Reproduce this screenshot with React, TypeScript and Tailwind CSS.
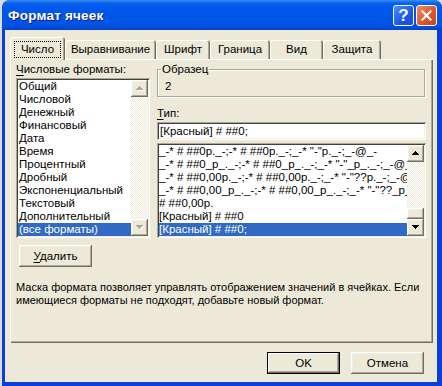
import React from "react";

const raised =
  "shadow-[inset_-1px_-1px_0_#716F64,inset_1px_1px_0_#fff,inset_-2px_-2px_0_#ACA899,inset_2px_2px_0_#F1EFE2]";
const sunken =
  "shadow-[inset_1px_1px_0_#ACA899,inset_-1px_-1px_0_#fff,inset_2px_2px_0_#404040,inset_-2px_-2px_0_#F1EFE2]";
const track =
  "bg-[repeating-conic-gradient(#fff_0_25%,#ECE9D8_0_50%)] bg-[length:2px_2px]";

const leftItems = [
  "Общий",
  "Числовой",
  "Денежный",
  "Финансовый",
  "Дата",
  "Время",
  "Процентный",
  "Дробный",
  "Экспоненциальный",
  "Текстовый",
  "Дополнительный",
  "(все форматы)",
];

const typeItems = [
  '_-* # ##0р._-;-* # ##0р._-;_-* "-"р._-;_-@_-',
  '_-* # ##0_р_._-;-* # ##0_р_._-;_-* "-"_р_._-;_-@_-',
  '_-* # ##0,00р._-;-* # ##0,00р._-;_-* "-"??р._-;_-@_-',
  '_-* # ##0,00_р_._-;-* # ##0,00_р_._-;_-* "-"??_р_._-;_-@_-',
  "# ##0,00р.",
  "[Красный] # ##0",
  "[Красный] # ##0;",
];

const tabs = [
  { label: "Выравнивание", w: "w-[91px]" },
  { label: "Шрифт", w: "w-[54px]" },
  { label: "Граница", w: "w-[60px]" },
  { label: "Вид", w: "w-[53px]" },
  { label: "Защита", w: "w-[58px]" },
];

function Arrow({ up, disabled }: { up?: boolean; disabled?: boolean }) {
  const d = up
    ? "M3 0h1v1h1v1h1v1h1v1H0V3h1V2h1V1h1z"
    : "M0 0h7v1H6v1H5v1H4v1H3V3H2V2H1V1H0z";
  return (
    <svg width="8" height="5" viewBox="0 0 8 5" shapeRendering="crispEdges">
      {disabled && <path d={d} fill="#fff" transform="translate(1 1)" />}
      <path d={d} fill={disabled ? "#ACA899" : "#000"} />
    </svg>
  );
}

function ScrollButton({ up, disabled }: { up?: boolean; disabled?: boolean }) {
  return (
    <div className={`w-[17px] h-[17px] shrink-0 bg-[#ECE9D8] flex items-center justify-center ${raised}`}>
      <Arrow up={up} disabled={disabled} />
    </div>
  );
}

function Button({ children, primary }: { children: React.ReactNode; primary?: boolean }) {
  return (
    <div
      className={`w-[73px] h-[22px] bg-[#ECE9D8] flex items-center justify-center ${
        primary
          ? "shadow-[inset_0_0_0_1px_#000,inset_-2px_-2px_0_#716F64,inset_2px_2px_0_#fff,inset_-3px_-3px_0_#ACA899]"
          : raised
      }`}
    >
      {children}
    </div>
  );
}

export default function App() {
  return (
    <div className="w-[442px] h-[386px] bg-[#D8DCE4] flex overflow-hidden font-['Liberation_Sans',Arial,sans-serif] text-[11.5px] leading-[13px] text-black">
      <div className="ml-[2px] w-[440px] h-[386px] rounded-t-[8px] bg-[#0B3FD9] flex flex-col">
        {/* title bar */}
        <div className="h-[30px] shrink-0 rounded-t-[8px] bg-[linear-gradient(to_bottom,#3D8DF5_0%,#0A62EC_10%,#0058EE_25%,#0055E8_60%,#0052E2_85%,#0043CC_100%)] flex items-center pl-[6px] pr-[5px]">
          <span className="text-white font-bold text-[13.5px] [text-shadow:1px_1px_0_#0A1E8C] tracking-[0.2px]">
            Формат ячеек
          </span>
          <div className="ml-auto flex gap-[2px]">
            <div className="w-[21px] h-[21px] rounded-[3px] border border-white bg-[linear-gradient(135deg,#4A8BFF,#1C58E8_60%,#1A4CD0)] flex items-center justify-center">
              <span className="text-white font-bold text-[17px] leading-none">?</span>
            </div>
            <div className="w-[21px] h-[21px] rounded-[3px] border border-white bg-[linear-gradient(135deg,#F08A6A,#E0562E_55%,#C8401C)] flex items-center justify-center">
              <svg width="11" height="11" viewBox="0 0 11 11">
                <path d="M1.5 1.5 9.5 9.5M9.5 1.5 1.5 9.5" stroke="#fff" strokeWidth="2.2" strokeLinecap="square" />
              </svg>
            </div>
          </div>
        </div>

        {/* body */}
        <div className="ml-[3px] w-[432px] h-[352px] bg-[#ECE9D8] flex flex-col">
          {/* tabs */}
          <div className="flex items-end h-[22px] mt-[7px] ml-[5px]">
            <div className="relative z-10 w-[55px] h-[23px] -mb-px rounded-t-[3px] bg-[#ECE9D8] shadow-[inset_1px_1px_0_#fff,inset_-1px_0_0_#716F64,inset_-2px_0_0_#ACA899] flex justify-center pt-[4px]">
              <span className="w-[47px] h-[17px] border border-dotted border-black flex items-center justify-center">
                Число
              </span>
            </div>
            {tabs.map((t) => (
              <div
                key={t.label}
                className={`${t.w} h-[19px] rounded-t-[3px] bg-[#ECE9D8] shadow-[inset_1px_1px_0_#fff,inset_-1px_0_0_#716F64,inset_-2px_0_0_#ACA899] flex items-center justify-center`}
              >
                {t.label}
              </div>
            ))}
          </div>

          {/* panel */}
          <div className="ml-[5px] w-[423px] h-[284px] shrink-0 shadow-[inset_1px_1px_0_#fff,inset_-1px_-1px_0_#716F64,inset_-2px_-2px_0_#ACA899] flex flex-col">
            <div className="flex">
              {/* left column */}
              <div className="ml-[6px] w-[134px] flex flex-col">
                <div className="mt-[4px] h-[13px]">
                  <span className="underline underline-offset-2">Ч</span>исловые форматы:
                </div>
                <div className={`mt-[2px] h-[160px] bg-white p-[2px] flex ${sunken}`}>
                  <div className="flex-1 flex flex-col overflow-hidden">
                    {leftItems.map((it, i) => (
                      <div
                        key={it}
                        className={`h-[13px] pl-px whitespace-nowrap ${
                          i === leftItems.length - 1 ? "bg-[#316AC5] text-white" : ""
                        }`}
                      >
                        {it}
                      </div>
                    ))}
                  </div>
                  <div className="w-[17px] flex flex-col">
                    <ScrollButton up disabled />
                    <div className={`flex-1 ${track}`} />
                    <ScrollButton disabled />
                  </div>
                </div>
              </div>

              {/* right column */}
              <div className="ml-[7px] w-[269px] flex flex-col">
                <div className="relative mt-[10px] w-[268px] h-[28px] border border-[#ACA899] shadow-[inset_1px_1px_0_#fff,1px_1px_0_#fff] pt-[10px] pl-[7px]">
                  <span className="absolute -top-[7px] left-[3px] bg-[#ECE9D8] px-px">Образец</span>
                  2
                </div>
                <div className="mt-[10px] h-[13px]">
                  <span className="underline underline-offset-2">Т</span>ип:
                </div>
                <div className={`mt-[2px] h-[18px] bg-white pl-[3px] flex items-center ${sunken}`}>
                  [Красный] # ##0;
                </div>
                <div className={`mt-[3px] h-[95px] bg-white p-[2px] flex ${sunken}`}>
                  <div className="flex-1 flex flex-col overflow-hidden">
                    {typeItems.map((it, i) => (
                      <div
                        key={it}
                        className={`h-[13px] whitespace-nowrap overflow-hidden ${
                          i === typeItems.length - 1 ? "bg-[#316AC5] text-white" : ""
                        }`}
                      >
                        {it}
                      </div>
                    ))}
                  </div>
                  <div className="w-[17px] flex flex-col">
                    <ScrollButton up />
                    <div className={`flex-1 flex flex-col justify-end ${track}`}>
                      <div className={`h-[11px] bg-[#ECE9D8] ${raised}`} />
                    </div>
                    <ScrollButton />
                  </div>
                </div>
              </div>
            </div>

            <div className="ml-[9px] mt-[7px]">
              <Button>
                <span>
                  <span className="underline underline-offset-2">У</span>далить
                </span>
              </Button>
            </div>

            <div className="ml-[6px] mt-[14px] w-[405px] text-[11px] leading-[13px]">
              <div>Маска формата позволяет управлять отображением значений в ячейках. Если</div>
              <div>имеющиеся форматы не подходят, добавьте новый формат.</div>
            </div>
          </div>

          {/* footer */}
          <div className="flex justify-end gap-[11px] mr-[13px] mt-[9px]">
            <Button primary>OK</Button>
            <Button>Отмена</Button>
          </div>
        </div>
      </div>
    </div>
  );
}
